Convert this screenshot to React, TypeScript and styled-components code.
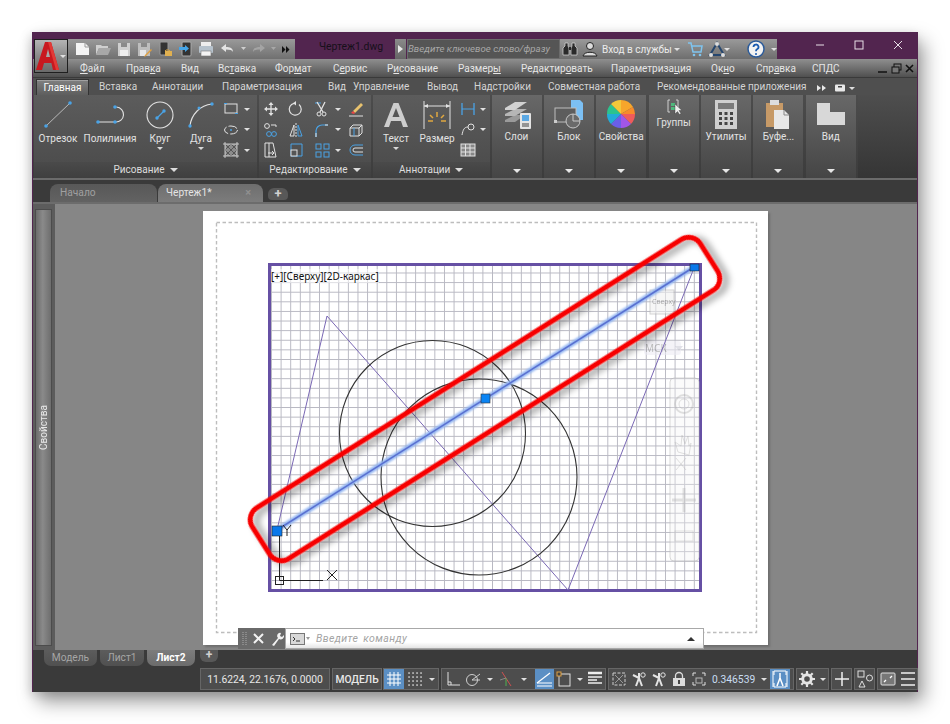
import React from "react";
import styled, { createGlobalStyle, css } from "styled-components";

const Global = createGlobalStyle`
  html, body { margin: 0; padding: 0; background: #fff; }
  body { font-family: Roboto, "Liberation Sans", sans-serif; }
  #root { width: 950px; height: 724px; overflow: hidden; }
`;

const Page = styled.div`
  padding: 32px 0 0 32px;
  width: 950px;
  height: 724px;
  box-sizing: border-box;
`;
const Win = styled.div`
  width: 886px;
  height: 660px;
  background: #3a3a3a;
  display: flex;
  flex-direction: column;
  position: relative;
  box-shadow: 6px 10px 18px rgba(0,0,0,.38), -2px 3px 10px rgba(0,0,0,.14);
  border-left: 1px solid #52254f;
  border-right: 1px solid #52254f;
  box-sizing: border-box;
`;

/* ---------- title bar ---------- */
const TitleBar = styled.div`
  height: 27px;
  background: #52254f;
  display: flex;
  padding-top: 7px;
  box-sizing: border-box;
  flex: none;
`;
const AppButton = styled.div`
  position: absolute;
  left: 1px;
  top: 7px;
  width: 34px;
  height: 34px;
  box-sizing: border-box;
  border: 1px solid #1f1f1f;
  background: linear-gradient(#b4b4b4, #8a8a8a 50%, #6a6a6a);
  z-index: 3;
  display: flex;
  align-items: center;
  justify-content: center;
`;
const Qat = styled.div`
  margin-left: 34px;
  width: 228px;
  height: 20px;
  background: linear-gradient(#9a9a9a, #707070);
  display: flex;
  align-items: center;
  padding-left: 5px;
  box-sizing: border-box;
`;
const QatSlot = styled.div<{ $w?: number }>`
  width: ${p => p.$w ?? 20.7}px;
  flex: none;
  display: flex;
  align-items: center;
  justify-content: center;
`;
const TitleText = styled.div`
  width: 100px;
  padding-left: 12px;
  box-sizing: border-box;
  text-align: center;
  font-size: 10.4px;
  line-height: 15px;
  color: #16101a;
  flex: none;
`;
const SearchArrow = styled.div`
  width: 11px;
  height: 20px;
  background: linear-gradient(#8a8a8a, #666);
  display: flex;
  align-items: center;
  justify-content: center;
  flex: none;
`;
const SearchBox = styled.div`
  width: 153px;
  height: 20px;
  margin-left: 1px;
  background: #555;
  border: 1px solid #6c6c6c;
  box-sizing: border-box;
  color: #a8a8a8;
  font-style: italic;
  font-size: 9.7px;
  line-height: 18px;
  white-space: nowrap;
  flex: none;
`;
const Info = styled.div`
  width: 217px;
  height: 20px;
  background: linear-gradient(#9a9a9a, #6e6e6e);
  display: flex;
  align-items: center;
  flex: none;
  color: #ececec;
  font-size: 10px;
  white-space: nowrap;
`;
const InfoLabel = styled.span`
  width: 72px;
  margin-left: 2px;
  flex: none;
`;
const WinButtons = styled.div`
  display: flex;
  flex: 1;
  justify-content: flex-end;
  height: 20px;
  margin-top: -4px;
`;
const WinBtn = styled.div`
  width: 39px;
  height: 20px;
  display: flex;
  align-items: center;
  justify-content: center;
`;

/* ---------- menu ---------- */
const MenuBar = styled.div`
  height: 18px;
  background: linear-gradient(#8f8f8f, #6f6f6f 50%, #505050);
  display: flex;
  align-items: center;
  padding-left: 47px;
  font-size: 10px;
  color: #e6e6e6;
  flex: none;
`;
const MenuItem = styled.span<{ $w: number }>`
  white-space: nowrap;
  flex: none;
  width: ${p => p.$w}px;
  u { text-underline-offset: 1px; }
`;
const MdiButtons = styled.div`
  margin-left: auto;
  margin-right: 3px;
  display: flex;
  gap: 3px;
  align-items: center;
`;

/* ---------- ribbon ---------- */
const RibbonTabs = styled.div`
  height: 18px;
  background: #4f4f4f;
  border-top: 1px solid #3a3a3a;
  box-sizing: border-box;
  display: flex;
  align-items: flex-end;
  padding-left: 3px;
  font-size: 10px;
  color: #d4d4d4;
  flex: none;
  white-space: nowrap;
`;
const RibbonTab = styled.div<{ $w: number; $on?: boolean }>`
  width: ${p => p.$w}px;
  flex: none;
  line-height: 16px;
  ${p => p.$on && css`
    height: 16px;
    margin-right: 10px;
    text-align: center;
    color: #fff;
    background: linear-gradient(#808080, #5e5e5e);
    border: 1px solid #333;
    border-bottom: none;
    box-shadow: inset 0 1px 0 #a0a0a0;
    box-sizing: border-box;
    line-height: 15px;
  `}
`;
const Ribbon = styled.div`
  height: 83px;
  flex: none;
  display: flex;
  background: linear-gradient(#4c4c4c, #3c3c3c);
  padding: 0 0 0 1px;
  border-bottom: 2px solid #6b6b6b;
  box-sizing: content-box;
`;
const Panel = styled.div<{ $w: number }>`
  width: ${p => p.$w}px;
  flex: none;
  margin-right: 2px;
  display: flex;
  flex-direction: column;
  background: linear-gradient(#5c5c5c, #4a4a4a);
`;
const PanelBody = styled.div`
  height: 67px;
  display: flex;
  flex: none;
`;
const PanelFooter = styled.div`
  height: 16px;
  flex: none;
  background: linear-gradient(#4a4a4a, #3f3f3f);
  color: #dcdcdc;
  font-size: 10px;
  line-height: 16px;
  text-align: center;
  white-space: nowrap;
`;
const FooterArrow = styled.span`
  display: inline-block;
  margin-left: 5px;
  border: 4px solid transparent;
  border-top-color: #dcdcdc;
  border-bottom: none;
  vertical-align: 1px;
`;
const LargeTool = styled.div<{ $w: number }>`
  width: ${p => p.$w}px;
  flex: none;
  display: flex;
  flex-direction: column;
  align-items: center;
  color: #e2e2e2;
  font-size: 10px;
  line-height: 14px;
  padding-top: 5px;
  white-space: nowrap;
`;
const LargeIcon = styled.div`
  height: 29px;
  display: flex;
  align-items: center;
  justify-content: center;
`;
const LargeLabel = styled.div`
  margin-top: 3px;
  height: 14px;
`;
const TinyArrow = styled.span`
  display: block;
  margin: 1px auto 0;
  width: 0;
  border: 3px solid transparent;
  border-top-color: #d8d8d8;
  border-bottom: none;
`;
const SmallGrid = styled.div<{ $cols: string }>`
  display: grid;
  grid-template-columns: ${p => p.$cols};
  grid-auto-rows: 20.5px;
  align-items: center;
  justify-items: center;
  padding-top: 4px;
`;
const SideArrow = styled.span`
  display: block;
  width: 0;
  border: 3px solid transparent;
  border-top-color: #e0e0e0;
  border-bottom: none;
`;
const CollapsedPanel = styled.div`
  width: 50px;
  flex: none;
  margin-right: 2.4px;
  background: linear-gradient(#686868, #454545);
  display: flex;
  flex-direction: column;
  align-items: center;
  color: #e2e2e2;
  font-size: 10px;
  position: relative;
`;
const CollapsedIcon = styled.div<{ $h: number }>`
  height: ${p => p.$h}px;
  margin-top: 3px;
  display: flex;
  align-items: center;
  justify-content: center;
`;
const CollapsedLabel = styled.div`
  line-height: 14px;
  white-space: nowrap;
`;
const CollapsedArrow = styled.span`
  position: absolute;
  bottom: 5px;
  left: 21px;
  border: 4px solid transparent;
  border-top-color: #e6e6e6;
  border-bottom: none;
`;
const RibbonRest = styled.div`
  flex: 1;
  background: linear-gradient(#4e4e4e, #353535);
`;

/* ---------- document tabs ---------- */
const DocTabs = styled.div`
  height: 22px;
  flex: none;
  background: #3a3a3a;
  display: flex;
  align-items: flex-end;
  padding-left: 17px;
  font-size: 10.2px;
`;
const DocTab = styled.div<{ $w: number; $on?: boolean }>`
  width: ${p => p.$w}px;
  height: 18px;
  flex: none;
  margin-right: 1px;
  box-sizing: border-box;
  padding-left: ${p => (p.$on ? 8 : 10)}px;
  line-height: 17px;
  border-radius: 8px 8px 0 0;
  color: ${p => (p.$on ? "#e4e4e4" : "#a0a0a0")};
  background: ${p => (p.$on ? "linear-gradient(#6e6e6e, #7c7c7c)" : "linear-gradient(#585858, #626262)")};
  display: flex;
  justify-content: space-between;
  padding-right: 12px;
`;
const DocPlus = styled.div`
  width: 20px;
  height: 12px;
  margin: 0 0 2px 4px;
  border-radius: 6px 6px 4px 4px;
  background: #585858;
  color: #cfcfcf;
  font-size: 13px;
  line-height: 12px;
  text-align: center;
  font-weight: 700;
`;
const TabClose = styled.span`
  color: #8f8f8f;
  font-weight: 700;
  font-size: 11px;
`;

/* ---------- model area ---------- */
const Work = styled.div`
  flex: 1;
  display: flex;
  min-height: 0;
  background: #808080;
  border-top: 2px solid #6c6c6c;
  box-sizing: border-box;
`;
const SideDock = styled.div`
  width: 22px;
  flex: none;
  padding: 5px 0 4px 2px;
  box-sizing: border-box;
  background: #5c5c5c;
  display: flex;
`;
const SideStrip = styled.div`
  width: 17px;
  border: 1px solid #4c4c4c;
  background: linear-gradient(90deg, #6c6c6c, #8a8a8a 45%, #6e6e6e);
  display: flex;
  align-items: center;
  justify-content: center;
  box-sizing: border-box;
  color: #e8e8e8;
  font-size: 10px;
`;
const SideText = styled.span`
  writing-mode: vertical-rl;
  transform: rotate(180deg);
`;
const Canvas = styled.div`
  flex: 1;
  padding: 7px 0 0 148px;
  box-sizing: border-box;
  background: #868686;
  overflow: hidden;
`;
const Paper = styled.div`
  width: 565px;
  height: 434px;
  background: #fff;
  box-shadow: 2px 2px 2px #6e6e6e;
  padding: 52px 0 0 65px;
  box-sizing: border-box;
  position: relative;
`;
const Viewport = styled.div`
  width: 434px;
  height: 329px;
  border: 3px solid #6650a4;
  box-sizing: border-box;
  font-family: "Noto Sans", sans-serif;
  font-size: 10px;
  line-height: 12px;
  color: #111;
  padding: 4px 0 0 0;
  background-color: #fff;
  background-image:
    linear-gradient(90deg, #b8b8c2 1.4px, transparent 1.4px),
    linear-gradient(#b8b8c2 1.4px, transparent 1.4px);
  background-size: 9.62px 9.62px;
  background-position: 0 6.5px;
`;
const ViewLabel = styled.span`
  background: rgba(255,255,255,.55);
  white-space: nowrap;
`;
const Drawing = styled.svg`
  position: absolute;
  left: 0;
  top: 0;
  width: 565px;
  height: 434px;
`;
const CmdLine = styled.div`
  position: absolute;
  left: 35px;
  top: 417px;
  width: 466px;
  height: 21px;
  display: flex;
  z-index: 2;
`;
const CmdTools = styled.div`
  width: 47px;
  flex: none;
  background: #6a6a6a;
  display: flex;
  align-items: center;
  gap: 6px;
  padding-left: 4px;
  box-sizing: border-box;
  color: #f2f2f2;
`;
const CmdInput = styled.div`
  flex: 1;
  background: linear-gradient(#fff 70%, #e4e4e4);
  border: 1px solid #a8a8a8;
  box-sizing: border-box;
  display: flex;
  align-items: center;
  padding: 0 8px 0 4px;
  gap: 6px;
  font-style: italic;
  color: #a4a4a4;
  font-size: 10.5px;
  letter-spacing: .4px;
  word-spacing: 2px;
`;
const CmdCaret = styled.span`
  margin-left: auto;
  border: 4px solid transparent;
  border-bottom-color: #333;
  border-top: none;
`;

/* ---------- layout tabs ---------- */
const LayoutTabs = styled.div`
  height: 16px;
  flex: none;
  background: #3a3a3a;
  display: flex;
  padding-left: 11px;
  font-size: 10.2px;
  gap: 3px;
`;
const LayoutTab = styled.div<{ $w: number; $on?: boolean }>`
  width: ${p => p.$w}px;
  height: 16px;
  flex: none;
  text-align: center;
  line-height: 15px;
  border-radius: 0 0 7px 7px;
  color: ${p => (p.$on ? "#fff" : "#a6a6a6")};
  font-weight: ${p => (p.$on ? 700 : 400)};
  background: ${p => (p.$on ? "linear-gradient(#7c7c7c, #6c6c6c)" : "linear-gradient(#5c5c5c, #505050)")};
`;
const LayoutPlus = styled.div`
  width: 18px;
  height: 12px;
  margin-left: 2px;
  border-radius: 0 0 6px 6px;
  background: #585858;
  color: #d0d0d0;
  font-size: 12px;
  line-height: 11px;
  text-align: center;
  font-weight: 700;
`;

/* ---------- status ---------- */
const Status = styled.div`
  height: 26px;
  flex: none;
  background: #3a3a3a;
  display: flex;
  align-items: flex-start;
  padding: 2px 0 0 167px;
  box-sizing: border-box;
  color: #e8e8e8;
  font-size: 10.3px;
`;
const StatusGroup = styled.div<{ $w: number; $mr?: number }>`
  width: ${p => p.$w}px;
  height: 22px;
  flex: none;
  margin-right: ${p => p.$mr ?? 2}px;
  background: #4d4d4d;
  border: 1px solid #666;
  box-sizing: border-box;
  display: flex;
  align-items: center;
  white-space: nowrap;
`;
const StatusText = styled.div<{ $bold?: boolean }>`
  width: 100%;
  text-align: center;
  flex: none;
  font-weight: ${p => (p.$bold ? 500 : 400)};
`;
const StatusBtn = styled.div<{ $w: number; $on?: boolean }>`
  width: ${p => p.$w}px;
  height: 20px;
  flex: none;
  display: flex;
  align-items: center;
  justify-content: center;
  background: ${p => (p.$on ? "#5b8fc4" : "transparent")};
`;
const ScaleText = styled.span`
  color: #c9def2;
  width: 45px;
  flex: none;
  margin-left: 3px;
`;
const IconSvg = styled.svg`
  display: block;
  flex: none;
  overflow: visible;
`;

type IP = { s?: number; w?: number; h?: number; vb?: string; children?: React.ReactNode };
const I = ({ s = 16, w, h, vb, children }: IP) => (
  <IconSvg width={w ?? s} height={h ?? s} viewBox={vb ?? `0 0 ${w ?? s} ${h ?? s}`} fill="none">{children}</IconSvg>
);

const BL = "#4aa3e6";
const WH = "#e2e2e2";
const Grip = ({ x, y, r = 1.6 }: { x: number; y: number; r?: number }) => <circle cx={x} cy={y} r={r} fill={BL} />;

/* QAT icons */
const QatIcons = [
  <I s={16}><path d="M2 2h9l4 4v8H2z" fill="#f4f4f4" /><path d="M11 2v4h4" stroke="#999" /></I>,
  <I s={16}><path d="M1 4h5l1 1h6v2H4L1 14z" fill="#cfcfcf" /><path d="M4 7h12l-3 7H1z" fill="#a8a8a8" /></I>,
  <I s={16}><path d="M2 2h12v13H2z" fill="#cfcfcf" /><path d="M5 2h6v4H5z" fill="#8a8a8a" /><path d="M4 9h8v6H4z" fill="#eee" /></I>,
  <I s={16}><path d="M2 2h12v13H2z" fill="#bdbdbd" /><path d="M5 2h6v4H5z" fill="#8a8a8a" /><path d="M4 9h6v6H4z" fill="#e8e8e8" /><path d="M9 14l6-6 1 1-6 6-2 1z" fill="#e0a040" /></I>,
  <I s={16}><rect x="3" y="1" width="8" height="13" rx="1" fill="#333" stroke="#999" /><path d="M8 10h7v5H8z" fill="#e0b050" /><path d="M8 10l1-1h3l1 1" stroke="#d0a040" /></I>,
  <I s={16}><rect x="4" y="1" width="9" height="14" rx="1" fill="#333" stroke="#aaa" /><path d="M1 6h6V4l4 3.5L7 11V9H1z" fill="#45a5e8" /></I>,
  <I s={16}><rect x="3" y="1" width="10" height="5" fill="#eee" /><rect x="1" y="5" width="14" height="7" rx="1" fill="#b6c2cc" /><rect x="3" y="10" width="10" height="5" fill="#f4f4f4" stroke="#777" strokeWidth=".6" /></I>,
  <I s={14}><path d="M1 6l5-4v3c4 0 7 1 7 5-1-2-3-2.600-7-2.600V10z" fill="#e4e4e4" /></I>,
  <I w={5} h={4}><path d="M0 0h5L2.500 3z" fill="#cfcfcf" /></I>,
  <I s={14}><path d="M13 6L8 2v3C4 5 1 6 1 10c1-2 3-2.600 7-2.600V10z" fill="#a4a4a4" /></I>,
  <I w={5} h={4}><path d="M0 0h5L2.500 3z" fill="#a8a8a8" /></I>,
  <I w={8} h={7}><path d="M0 0l3.500 3.500L0 7zM4 0l3.500 3.500L4 7z" fill="#111" /></I>,
];
const QatWidths = [20.7, 20.7, 20.7, 20.7, 20.7, 20.7, 20.7, 20.7, 12, 18, 12, 13];

const LogoA = () => (
  <I w={24} h={30}><path d="M9 1h6l8 28h-6l-1.600-7H8L6 29H0z" fill="#c8181f" /><path d="M10 16h4l-2-8z" fill="#a8a8a8" /><path d="M12 1h3l8 28h-3z" fill="#e23a36" /></I>
);

/* ribbon icons */
const Line = () => <I w={28} h={27}><path d="M2 25L26 2" stroke="#b8b8b8" strokeWidth="1" /><Grip x={2} y={25} r={1.8} /><Grip x={26} y={2} r={1.8} /></I>;
const Poly = () => <I w={28} h={20}><path d="M1.500 17h18a7.500 7.500 0 0 0 1-15" stroke={WH} strokeWidth="1.100" /><Grip x={2} y={17} r={1.8} /><Grip x={19} y={17} r={1.8} /><Grip x={19} y={2} r={1.8} /></I>;
const Circle = () => <I w={28} h={28}><circle cx="14" cy="14" r="13" stroke={WH} strokeWidth="1.100" /><path d="M11 17l7-7" stroke={BL} strokeWidth="1.300" /><Grip x={11} y={17} r={1.7} /><Grip x={18} y={10} r={1.7} /></I>;
const Arc = () => <I w={26} h={26}><path d="M2 24C3 13 12 3 24 2" stroke={WH} strokeWidth="1.100" /><Grip x={2} y={24} r={1.7} /><Grip x={24} y={2} r={1.7} /><Grip x={11} y={6} r={1.5} /></I>;

const RectS = () => <I s={16}><rect x="2" y="3" width="12" height="9" stroke={WH} /><path d="M1 2.500h3M12 12.500h3" stroke={BL} /></I>;
const Ellipse = () => <I s={16}><ellipse cx="8" cy="8" rx="6.500" ry="4" stroke={WH} strokeDasharray="9 2" /><circle cx="8" cy="8" r="1" fill={BL} /></I>;
const Hatch = () => <I s={16}><rect x="2" y="2" width="12" height="12" fill="#8c8c8c" /><path d="M2 8l6-6M2 14L14 2M8 14l6-6M2 2l12 12M2 8l6 6M8 2l6 6" stroke="#333" strokeWidth=".6" /><path d="M0 2h16M0 14h16M2 0v16M14 0v16" stroke={WH} strokeWidth=".8" /></I>;

const Move = () => <I s={16}><path d="M8 1l2.500 3h-5zM8 15l2.500-3h-5zM1 8l3-2.500v5zM15 8l-3-2.500v5z" fill={WH} /><path d="M8 3v10M3 8h10" stroke={WH} strokeWidth="1.300" /></I>;
const Rotate = () => <I s={16}><path d="M11 3.500A6 6 0 1 1 6 2.300" stroke={WH} strokeWidth="1.200" /><path d="M8 0l-3 2.300 3 2.300z" fill={WH} /></I>;
const Trim = () => <I s={16}><path d="M1 2h6" stroke={BL} /><path d="M3 1l6 10M11 1L6 11" stroke={WH} strokeWidth="1.300" /><circle cx="5" cy="13" r="2" stroke={WH} /><circle cx="10" cy="13" r="2" stroke={WH} /></I>;
const Erase = () => <I s={16}><path d="M5 10l8-8 2 2-8 8z" fill="#e8c26e" /><path d="M3 12l2-2 2 2-1 1z" fill="#e44" /><path d="M1 15h14" stroke={WH} /></I>;
const Copy = () => <I s={16}><circle cx="4" cy="4" r="2.400" stroke={WH} /><circle cx="6" cy="12" r="2.400" stroke={BL} /><circle cx="11" cy="12" r="2.400" stroke={BL} /><path d="M8 3h5v2" stroke={WH} /></I>;
const Mirror = () => <I s={16}><path d="M6 3L2 14h4z" stroke={WH} /><path d="M10 3l4 11h-4z" stroke={BL} /><path d="M8 1v14" stroke={WH} strokeDasharray="2 1" /></I>;
const Fillet = () => <I s={16}><path d="M2 15V9a6 6 0 0 1 6-6h6" stroke={BL} strokeWidth="1.200" /><path d="M2 15v-4M11 3h3" stroke={WH} /></I>;
const Box3 = () => <I s={16}><path d="M2 6h9v8H2zM2 6l3-3h9v8l-3 3M11 6l3-3" stroke={WH} /><path d="M6 6v8" stroke={BL} /></I>;
const Stretch = () => <I s={16}><path d="M2 1h4v14H2zM6 1l4 0 3 14H6" stroke={WH} /><path d="M5 11h6l-2-2M11 11l-2 2" stroke={WH} /></I>;
const Scale = () => <I s={16}><path d="M3 2h11v12H3z" stroke={BL} /><rect x="3" y="8" width="6" height="6" stroke={WH} fill="#555" /></I>;
const Array4 = () => <I s={16}><rect x="2" y="2" width="5" height="5" stroke={BL} /><rect x="10" y="2" width="5" height="5" stroke={BL} /><rect x="2" y="10" width="5" height="5" stroke={BL} /><rect x="10" y="10" width="5" height="5" stroke={BL} /></I>;
const Offset = () => <I s={16}><path d="M15 3H7a5 5 0 0 0 0 10h8" stroke={BL} /><path d="M15 6H7a2 2 0 0 0 0 4h8" stroke={WH} /></I>;

const BigA = () => <I w={24} h={24}><path d="M9.500 0h5L24 24h-5l-2-6H7L5 24H0z" fill="#cdcdcd" /><path d="M8.500 14h7L12 5z" fill="#555" /></I>;
const Dim = () => <I w={28} h={28}><path d="M1 0v28M27 0v28" stroke={WH} /><path d="M1 5h26" stroke={WH} /><path d="M1 5l4-2v4zM27 5l-4-2v4z" fill={WH} /><path d="M14 11v5M7 14l3 3M21 14l-3 3M5 20h5M18 20h5" stroke="#e0a840" strokeWidth="1.500" /></I>;
const DimH = () => <I s={16}><path d="M2 2v12M14 2v12" stroke={BL} strokeWidth="1.300" /><path d="M2 8h12" stroke={BL} /></I>;
const Leader = () => <I s={16}><circle cx="11" cy="5" r="3" stroke={WH} /><path d="M8 5C4 5 3 8 2 13" stroke={WH} /></I>;
const Table = () => <I s={16}><rect x="1" y="2" width="14" height="12" fill="#888" stroke={WH} /><path d="M1 6h14M1 10h14M5.500 2v12M10 2v12" stroke={WH} /></I>;

const Layers = () => <I w={30} h={29}><path d="M3 20l10-5h10l-10 7H3z" fill="#9a9a9a" /><path d="M3 14l10-5h12l-12 7H3z" fill="#b6b6b6" /><path d="M3 8l10-6h12L13 10H3z" fill="#d2d2d2" /><rect x="18" y="13" width="11" height="16" rx="1" fill="#e4e4e4" /><rect x="20" y="15" width="7" height="6" fill="#5aa8e4" /><path d="M20 24h7M20 26h7" stroke="#444" /></I>;
const Block = () => <I w={30} h={29}><path d="M17 0h9l3 3v17H17z" fill="#7cc0f4" /><rect x="1" y="8" width="21" height="14" stroke="#bdbdbd" fill="#5d5d5d" /><circle cx="19" cy="21" r="7" stroke="#c8c8c8" fill="#6a6a6a" /><path d="M19 21h7M19 14v7" stroke="#c8c8c8" /><rect x="0" y="20" width="3" height="3" fill="#ccc" /></I>;
const Wheel = () => (
  <I s={28}>
    <path d="M14 14L14 0A14 14 0 0 1 26 7z" fill="#f7a62b" />
    <path d="M14 14L26 7A14 14 0 0 1 28 14z" fill="#f78b2b" />
    <path d="M14 14H28A14 14 0 0 1 24 24z" fill="#ef5b5b" />
    <path d="M14 14L24 24A14 14 0 0 1 14 28z" fill="#a156e8" />
    <path d="M14 14V28A14 14 0 0 1 4 24z" fill="#6a5fe8" />
    <path d="M14 14L4 24A14 14 0 0 1 0 14z" fill="#22acd8" />
    <path d="M14 14H0A14 14 0 0 1 4 4z" fill="#2cc38e" />
    <path d="M14 14L4 4A14 14 0 0 1 14 0z" fill="#f2c83a" />
  </I>
);
const Groups = () => <I s={16}><path d="M4 1H2v12h2M10 1h2v12" stroke="#cfcfcf" /><rect x="5" y="4" width="4" height="3" fill="#4fb87c" /><rect x="5" y="8" width="4" height="3" fill="#4fb87c" /><path d="M9 5v10l2.500-2.500 2 3 1.500-1-2-3H16z" fill="#eee" stroke="#333" strokeWidth=".4" /></I>;
const Calc = () => <I w={22} h={29}><rect x="0" y="0" width="22" height="29" fill="#cfcfcf" /><rect x="3" y="3" width="16" height="6" fill="#7a7a7a" /><path d="M4 12h3v3H4zM9.500 12h3v3h-3zM15 12h3v3h-3zM4 17h3v3H4zM9.500 17h3v3h-3zM15 17h3v3h-3zM4 22h3v3H4zM9.500 22h3v3h-3zM15 22h3v3h-3z" fill="#444" /></I>;
const Clip = () => <I w={24} h={29}><rect x="0" y="3" width="17" height="24" fill="#c79a67" /><rect x="4" y="0" width="9" height="5" fill="#ddd" /><path d="M8 10h10l5 5v14H8z" fill="#e8e8e8" /><path d="M18 10v5h5" stroke="#888" /></I>;
const ViewShape = () => <I w={28} h={22}><path d="M0 0h13v9h15v13H0z" fill="#d8d8d8" /></I>;

/* status icons */
const GridI = () => <I s={16}><path d="M4 1v14M8 1v14M12 1v14M1 4h14M1 8h14M1 12h14" stroke="#fff" /></I>;
const Dots = () => <I s={14}>{[1, 5, 9, 13].flatMap(x => [1, 5, 9, 13].map(y => <rect key={`${x}${y}`} x={x - .7} y={y - .7} width="1.500" height="1.500" fill="#dadada" />))}</I>;
const Ortho = () => <I s={16}><path d="M3 1v13h12" stroke="#e0e0e0" /><path d="M3 11h3v3" stroke="#e0e0e0" /></I>;
const Polar = () => <I s={16}><circle cx="7" cy="9" r="5.500" stroke="#cfcfcf" /><path d="M7 9l8-6M7 9h8" stroke="#cfcfcf" /></I>;
const Axes = () => <I s={16}><path d="M4 1l9 14" stroke="#d05050" /><path d="M8 7v8" stroke="#50b050" /><path d="M2 9l6-2" stroke="#888" /></I>;
const Angle = () => <I s={18}><path d="M1 13L14 3" stroke="#fff" strokeWidth="1.200" /><path d="M1 13h15M1 16h15" stroke="#fff" strokeWidth="1.200" /></I>;
const Tran = () => <I s={16}><rect x="3" y="3" width="11" height="12" stroke="#e0e0e0" /><rect x="1" y="1" width="4" height="4" fill="#444" stroke="#e0a040" /></I>;
const Lw = () => <I s={16}><path d="M1 2h14" stroke="#eee" strokeWidth="2.500" /><path d="M1 6h14M1 9h9M1 12h14" stroke="#eee" strokeWidth="1.500" /></I>;
const Sel1 = () => <I s={16}><rect x="2" y="2" width="12" height="12" stroke="#cfcfcf" strokeDasharray="3 1.500" /><path d="M4 4l8 8M12 4l-8 8" stroke="#9a9a9a" /></I>;
const Anno = ({ c = "#e4e4e4" }: { c?: string }) => <I s={16}><path d="M8 7L5 15M8 7l3 8M8 7L2 4M8 7V2" stroke={c} strokeWidth="2" /><circle cx="12" cy="4" r="2.200" stroke={c} /></I>;
const Lock = () => <I s={16}><rect x="2" y="7" width="12" height="8" fill="#dcdcdc" /><path d="M4.500 7V5a3.500 3.500 0 0 1 7 0v2" stroke="#dcdcdc" strokeWidth="1.300" /><rect x="7" y="9" width="2" height="4" fill="#444" /></I>;
const Iso = () => <I s={14}><path d="M1 4V1h3M10 1h3v3M13 10v3h-3M4 13H1v-3" stroke="#e0e0e0" /><rect x="4" y="6" width="6" height="5" stroke="#b8b8b8" /></I>;
const AnnoBtn = () => <I s={18}><path d="M3 5V1h12v4M3 13v4h12v-4M2 1v16M16 1v16" stroke="#fff" /><path d="M9 8l-3 8M9 8l3 8M9 8V3" stroke="#fff" strokeWidth="1.500" /></I>;
const Gear = () => <I s={16}><circle cx="8" cy="8" r="4.300" stroke="#e4e4e4" strokeWidth="3" /><path d="M8 0v3M8 13v3M0 8h3M13 8h3M2.300 2.300l2 2M11.700 11.700l2 2M13.700 2.300l-2 2M4.300 11.700l-2 2" stroke="#e4e4e4" strokeWidth="2.200" /></I>;
const Plus = () => <I s={16}><path d="M8 1v14M1 8h14" stroke="#f0f0f0" strokeWidth="1.500" /></I>;
const Shapes = () => <I s={18}><rect x="2" y="1" width="6" height="6" stroke="#e0e0e0" /><circle cx="13.500" cy="8" r="3" stroke="#e0e0e0" /><path d="M6 11l3 6H3z" stroke="#e0e0e0" /></I>;
const Screen = () => <I s={16}><rect x="1" y="2" width="14" height="12" rx="1" fill="#777" stroke="#e0e0e0" /><path d="M4 11l2-2M10 7l2-2" stroke="#fff" strokeWidth="1.300" /></I>;
const Burger = () => <I s={16}><path d="M1 2h14M1 8h14M1 14h14" stroke="#f0f0f0" strokeWidth="1.500" /></I>;

const menu: [string, string, string, number][] = [
  ["", "Ф", "айл", 46], ["Прав", "к", "а", 55], ["Ви", "д", "", 37], ["Вс", "т", "авка", 57], ["Фор", "м", "ат", 58],
  ["С", "е", "рвис", 54], ["Р", "и", "сование", 71], ["Размер", "ы", "", 63], ["Редактир", "о", "вать", 90],
  ["Параметриза", "ц", "ия", 100], ["Ок", "н", "о", 45], ["Спр", "а", "вка", 56], ["СПДС", "", "", 30],
];
const ribbonTabs: [string, number][] = [
  ["Вставка", 53], ["Аннотации", 70], ["Параметризация", 106], ["Вид", 25], ["Управление", 74], ["Вывод", 47],
  ["Надстройки", 74], ["Совместная работа", 109], ["Рекомендованные приложения", 160],
];

const SmallTool = ({ children, arrow }: { children: React.ReactNode; arrow?: boolean }) => <>{children}{arrow && <SideArrow />}</>;

export default function App() {
  return (
    <Page>
      <Global />
      <Win>
        <AppButton><LogoA /><SideArrow /></AppButton>
        <TitleBar>
          <Qat>
            {QatIcons.map((ic, i) => <QatSlot key={i} $w={QatWidths[i]}>{ic}</QatSlot>)}
          </Qat>
          <TitleText>Чертеж1.dwg</TitleText>
          <SearchArrow><I w={5} h={8}><path d="M0 0l5 4-5 4z" fill="#e8e8e8" /></I></SearchArrow>
          <SearchBox>Введите ключевое слово/фразу</SearchBox>
          <Info>
            <QatSlot $w={20}><I s={16}><path d="M3 2h3v3l1 2v7H1V7l2-2zM10 2h3v3l2 2v7H9V7l1-2z" fill="#2a2a2a" stroke="#ddd" strokeWidth=".7" /><path d="M7 6h2v3H7z" fill="#2a2a2a" /></I></QatSlot>
            <QatSlot $w={20}><I s={16}><circle cx="8" cy="5" r="3.500" fill="#ddd" stroke="#222" /><path d="M1 15c1-5 13-5 14 0z" fill="#ddd" stroke="#222" /></I></QatSlot>
            <InfoLabel>Вход в службы</InfoLabel>
            <SideArrow />
            <QatSlot $w={30}><I s={16}><path d="M1 2h3l2 9h8l1-6H5" stroke="#7fc4ee" strokeWidth="1.500" /><circle cx="7" cy="14" r="1.300" fill="#7fc4ee" /><circle cx="13" cy="14" r="1.300" fill="#7fc4ee" /></I></QatSlot>
            <QatSlot $w={14}><I s={16}><path d="M8 2L15 14H1z" stroke="#26476f" strokeWidth="2" /><circle cx="8" cy="3" r="2" fill="#ddd" /><circle cx="2" cy="14" r="2" fill="#ddd" /><circle cx="14" cy="14" r="2" fill="#ddd" /></I></QatSlot>
            <SideArrow />
            <QatSlot $w={11} />
            <QatSlot $w={30}><I s={18}><circle cx="9" cy="9" r="8" fill="#f2f2f2" stroke="#2a5a9a" strokeWidth="1.500" /><path d="M6.500 7a2.500 2.500 0 1 1 3.500 2.300c-.8.400-1 .8-1 2" stroke="#1a5ab0" strokeWidth="1.800" /><circle cx="9" cy="14" r="1" fill="#1a5ab0" /></I></QatSlot>
            <SideArrow />
          </Info>
          <WinButtons>
            <WinBtn><I s={10}><path d="M1 5h8" stroke="#e8e0e8" /></I></WinBtn>
            <WinBtn><I s={10}><rect x="1" y="1" width="8" height="8" stroke="#e8e0e8" /></I></WinBtn>
            <WinBtn><I s={10}><path d="M1 1l8 8M9 1l-8 8" stroke="#e8e0e8" /></I></WinBtn>
          </WinButtons>
        </TitleBar>
        <MenuBar>
          {menu.map(([a, u, b, w], i) => (
            <MenuItem key={i} $w={w}>{a}{u && <u>{u}</u>}{b}</MenuItem>
          ))}
          <MdiButtons>
            <I w={10} h={10}><path d="M0 9h9" stroke="#111" strokeWidth="1.500" /></I>
            <I w={11} h={11}><rect x="3" y="1" width="7" height="6" stroke="#111" /><rect x="1" y="4" width="7" height="6" fill="#777" stroke="#111" /></I>
            <I w={9} h={9}><path d="M1 1l7 7M8 1L1 8" stroke="#111" strokeWidth="1.600" /></I>
          </MdiButtons>
        </MenuBar>
        <RibbonTabs>
          <RibbonTab $w={53} $on>Главная</RibbonTab>
          {ribbonTabs.map(([t, w]) => <RibbonTab key={t} $w={w}>{t}</RibbonTab>)}
          <RibbonTab $w={40}>
            <I w={40} h={14}><path d="M0 4l4 3-4 3zM5 4l4 3-4 3z" fill="#e8e8e8" /><rect x="18" y="3.500" width="10" height="7" rx="1" fill="#e8e8e8" /><rect x="21" y="5" width="4" height="1.500" fill="#444" /><path d="M32 6h6l-3 3z" fill="#ddd" /></I>
          </RibbonTab>
        </RibbonTabs>
        <Ribbon>
          <Panel $w={223}>
            <PanelBody>
              <LargeTool $w={48}><LargeIcon><Line /></LargeIcon><LargeLabel>Отрезок</LargeLabel></LargeTool>
              <LargeTool $w={56}><LargeIcon><Poly /></LargeIcon><LargeLabel>Полилиния</LargeLabel></LargeTool>
              <LargeTool $w={44}><LargeIcon><Circle /></LargeIcon><LargeLabel>Круг</LargeLabel><TinyArrow /></LargeTool>
              <LargeTool $w={38}><LargeIcon><Arc /></LargeIcon><LargeLabel>Дуга</LargeLabel><TinyArrow /></LargeTool>
              <SmallGrid $cols="22px 10px">
                <SmallTool arrow><RectS /></SmallTool>
                <SmallTool arrow><Ellipse /></SmallTool>
                <SmallTool arrow><Hatch /></SmallTool>
              </SmallGrid>
            </PanelBody>
            <PanelFooter>Рисование<FooterArrow /></PanelFooter>
          </Panel>
          <Panel $w={112}>
            <PanelBody>
              <SmallGrid $cols="24px 26px 26px 6px 30px">
                <Move /><Rotate /><Trim /><SideArrow /><Erase />
                <Copy /><Mirror /><Fillet /><SideArrow /><Box3 />
                <Stretch /><Scale /><Array4 /><SideArrow /><Offset />
              </SmallGrid>
            </PanelBody>
            <PanelFooter>Редактирование<FooterArrow /></PanelFooter>
          </Panel>
          <Panel $w={116.500}>
            <PanelBody>
              <LargeTool $w={46}><LargeIcon><BigA /></LargeIcon><LargeLabel>Текст</LargeLabel><TinyArrow /></LargeTool>
              <LargeTool $w={36}><LargeIcon><Dim /></LargeIcon><LargeLabel>Размер</LargeLabel></LargeTool>
              <SmallGrid $cols="26px 4px">
                <SmallTool arrow><DimH /></SmallTool>
                <SmallTool arrow><Leader /></SmallTool>
                <Table /><i />
              </SmallGrid>
            </PanelBody>
            <PanelFooter>Аннотации<FooterArrow /></PanelFooter>
          </Panel>
          <CollapsedPanel><CollapsedIcon $h={32}><Layers /></CollapsedIcon><CollapsedLabel>Слои</CollapsedLabel><CollapsedArrow /></CollapsedPanel>
          <CollapsedPanel><CollapsedIcon $h={32}><Block /></CollapsedIcon><CollapsedLabel>Блок</CollapsedLabel><CollapsedArrow /></CollapsedPanel>
          <CollapsedPanel><CollapsedIcon $h={32}><Wheel /></CollapsedIcon><CollapsedLabel>Свойства</CollapsedLabel><CollapsedArrow /></CollapsedPanel>
          <CollapsedPanel><CollapsedIcon $h={18}><Groups /></CollapsedIcon><CollapsedLabel>Группы</CollapsedLabel><CollapsedArrow /></CollapsedPanel>
          <CollapsedPanel><CollapsedIcon $h={32}><Calc /></CollapsedIcon><CollapsedLabel>Утилиты</CollapsedLabel><CollapsedArrow /></CollapsedPanel>
          <CollapsedPanel><CollapsedIcon $h={32}><Clip /></CollapsedIcon><CollapsedLabel>Буфе...</CollapsedLabel><CollapsedArrow /></CollapsedPanel>
          <CollapsedPanel><CollapsedIcon $h={32}><ViewShape /></CollapsedIcon><CollapsedLabel>Вид</CollapsedLabel><CollapsedArrow /></CollapsedPanel>
          <RibbonRest />
        </Ribbon>
        <DocTabs>
          <DocTab $w={107}>Начало</DocTab>
          <DocTab $w={105} $on>Чертеж1*<TabClose>×</TabClose></DocTab>
          <DocPlus>+</DocPlus>
        </DocTabs>
        <Work>
          <SideDock><SideStrip><SideText>Свойства</SideText></SideStrip></SideDock>
          <Canvas>
            <Paper>
              <Viewport><ViewLabel>[+][Сверху][2D-каркас]</ViewLabel></Viewport>
              <Drawing viewBox="203 211 565 434" fill="none">
                <defs>
                  <filter id="sh" x="-10%" y="-20%" width="120%" height="150%">
                    <feDropShadow dx="4" dy="5" stdDeviation="3.500" floodColor="#000" floodOpacity=".45" />
                  </filter>
                  <filter id="gl" x="-10%" y="-20%" width="120%" height="140%">
                    <feGaussianBlur stdDeviation="1.300" />
                  </filter>
                </defs>
                <rect x="216.500" y="222.500" width="540" height="410" stroke="#bdbdbd" strokeWidth="1.400" strokeDasharray="3.500 2.500" />
                {/* faint view cube and navigation bar */}
                <g opacity=".55">
                  <rect x="650" y="290" width="24" height="24" fill="#f0f0f0" stroke="#b0b0b0" />
                  <text x="652" y="304" fontSize="7" fill="#777" fontFamily="Noto Sans, sans-serif">Сверху</text>
                  <rect x="644" y="341" width="37" height="14" rx="3" fill="#ecebf4" />
                  <text x="645" y="352" fontSize="10" fill="#8a8a8a" fontFamily="Noto Sans, sans-serif">МСК</text>
                  <path d="M675 346l8 0-4 5z" fill="#c8c8d4" />
                  <rect x="670" y="378" width="29" height="183" rx="4" fill="#f2f2f2" fillOpacity=".6" stroke="#b8b8b8" />
                  <circle cx="684" cy="404" r="9" stroke="#c4c4c4" strokeWidth="2" />
                  <circle cx="684" cy="404" r="5" stroke="#c4c4c4" />
                  <path d="M678 452l-3-10 6 4 1-11 3 9 3-8 1 10 2-3-2 12z" stroke="#c4c4c4" />
                  <path d="M676 458l10 12M676 470l10-12" stroke="#c4c4c4" />
                  <path d="M684 488v24M672 500h24" stroke="#c8c8c8" strokeWidth="3" />
                  <rect x="675" y="531" width="18" height="10" stroke="#c8c8c8" />
                </g>
                <path d="M277 530L327 316L568 590L694 268" stroke="#7a68b4" strokeWidth="1" />
                <circle cx="432.500" cy="433.500" r="93" stroke="#333" strokeWidth="1.100" />
                <circle cx="479" cy="477" r="98" stroke="#333" strokeWidth="1.100" />
                <path d="M277 530L694 267" stroke="#8fb2f0" strokeWidth="5" filter="url(#gl)" />
                <path d="M277 530L694 267" stroke="#5a70d0" strokeWidth="1.500" />
                <path d="M279.500 530v50.500H323" stroke="#222" />
                <rect x="275.500" y="576.500" width="8" height="8" stroke="#222" />
                <path d="M327 570l10 10M337 570l-10 10" stroke="#222" />
                <path d="M283 525l4 5 4-5M287 530v6" stroke="#222" />
                <rect x="272" y="526" width="10" height="10" fill="#0a78ea" stroke="#222" strokeWidth=".6" />
                <rect x="481" y="394" width="9" height="9" fill="#0a84f4" stroke="#333" strokeWidth=".6" />
                <rect x="690" y="264" width="9" height="7" fill="#0a78ea" stroke="#222" strokeWidth=".6" />
                <rect x="220" y="369" width="530" height="60" rx="14" transform="rotate(-32.300 485 399)" stroke="#f70000" strokeWidth="5" filter="url(#sh)" />
              </Drawing>
              <CmdLine>
                <CmdTools>
                  <I w={5} h={15}><path d="M1 1v13M4 1v13" stroke="#aaa" strokeDasharray="1 1" /></I>
                  <I s={11}><path d="M1 1l9 9M10 1l-9 9" stroke="#f2f2f2" strokeWidth="2" /></I>
                  <I s={14}><path d="M2 13l6-7a3 3 0 0 1 3-5l-1 3 2 1 2-2a3.500 3.500 0 0 1-5 4l-5 7z" fill="#f2f2f2" /></I>
                </CmdTools>
                <CmdInput>
                  <I w={20} h={12}><rect x=".5" y=".5" width="14" height="11" fill="#d8d8d8" stroke="#777" /><path d="M3 4l2 2-2 2M6 8h4" stroke="#333" /><path d="M16 4h4l-2 3z" fill="#999" /></I>
                  <span>Введите команду</span>
                  <CmdCaret />
                </CmdInput>
              </CmdLine>
            </Paper>
          </Canvas>
        </Work>
        <LayoutTabs>
          <LayoutTab $w={53}>Модель</LayoutTab>
          <LayoutTab $w={44}>Лист1</LayoutTab>
          <LayoutTab $w={48} $on>Лист2</LayoutTab>
          <LayoutPlus>+</LayoutPlus>
        </LayoutTabs>
        <Status>
          <StatusGroup $w={130}><StatusText>11.6224, 22.1676, 0.0000</StatusText></StatusGroup>
          <StatusGroup $w={50} $mr={1}><StatusText $bold>МОДЕЛЬ</StatusText></StatusGroup>
          <StatusGroup $w={56}>
            <StatusBtn $w={20} $on><GridI /></StatusBtn>
            <StatusBtn $w={21}><Dots /></StatusBtn>
            <StatusBtn $w={13}><SideArrow /></StatusBtn>
          </StatusGroup>
          <StatusGroup $w={165} $mr={2}>
            <StatusBtn $w={21}><Ortho /></StatusBtn>
            <StatusBtn $w={20}><Polar /></StatusBtn>
            <StatusBtn $w={13}><SideArrow /></StatusBtn>
            <StatusBtn $w={20}><Axes /></StatusBtn>
            <StatusBtn $w={15}><SideArrow /></StatusBtn>
            <StatusBtn $w={4} />
            <StatusBtn $w={19} $on><Angle /></StatusBtn>
            <StatusBtn $w={20}><Tran /></StatusBtn>
            <StatusBtn $w={11}><SideArrow /></StatusBtn>
            <StatusBtn $w={20}><Lw /></StatusBtn>
          </StatusGroup>
          <StatusGroup $w={186} $mr={2}>
            <StatusBtn $w={20}><Sel1 /></StatusBtn>
            <StatusBtn $w={20}><Anno /></StatusBtn>
            <StatusBtn $w={20}><Anno /></StatusBtn>
            <StatusBtn $w={20}><Lock /></StatusBtn>
            <StatusBtn $w={20}><Iso /></StatusBtn>
            <ScaleText>0.346539</ScaleText>
            <StatusBtn $w={13}><SideArrow /></StatusBtn>
            <StatusBtn $w={20} $on><AnnoBtn /></StatusBtn>
          </StatusGroup>
          <StatusGroup $w={33}>
            <StatusBtn $w={20}><Gear /></StatusBtn>
            <StatusBtn $w={11}><SideArrow /></StatusBtn>
          </StatusGroup>
          <StatusGroup $w={21}><StatusBtn $w={19}><Plus /></StatusBtn></StatusGroup>
          <StatusGroup $w={21}><StatusBtn $w={19}><Shapes /></StatusBtn></StatusGroup>
          <StatusGroup $w={41} $mr={0}>
            <StatusBtn $w={20}><Screen /></StatusBtn>
            <StatusBtn $w={19}><Burger /></StatusBtn>
          </StatusGroup>
        </Status>
      </Win>
    </Page>
  );
}
